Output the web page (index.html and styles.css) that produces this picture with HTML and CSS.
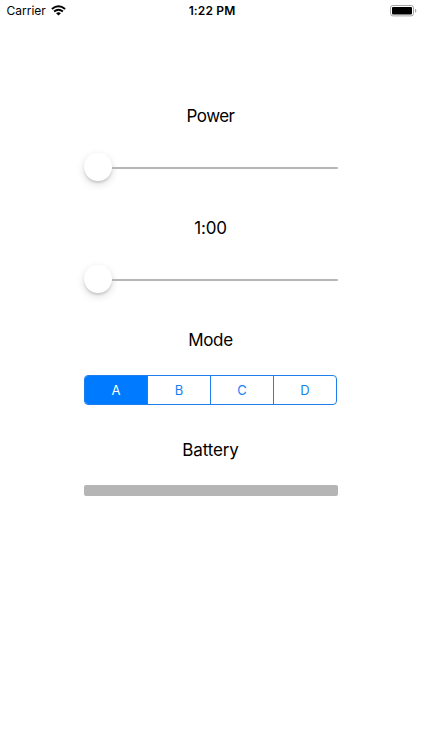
FILE: index.html
```html
<!DOCTYPE html>
<html lang="en">
<head>
<meta charset="utf-8">
<title>Controls</title>
<link rel="stylesheet" href="styles.css">
</head>
<body>
<header class="status">
  <div class="carrier"><span class="carrier-name">Carrier</span>
    <svg class="wifi" width="15" height="11" viewBox="0 0 15 11">
      <g fill="none" stroke="#000" stroke-width="1.9">
        <path d="M.9 3.9Q7.5-1.5 14.1 3.9"/>
        <path d="M3.1 6.4Q7.5 2.9 11.9 6.4"/>
      </g>
      <path d="M5.1 8.2Q7.5 6.4 9.9 8.2L7.5 10.5Z"/>
    </svg>
  </div>
  <div class="time">1:22 PM</div>
  <svg class="battery-icon" width="27" height="12" viewBox="0 0 27 12">
    <rect x=".5" y=".5" width="23" height="10.4" rx="2.4" fill="#fff" stroke="#a5a5a5"/>
    <rect x="2" y="2" width="20" height="7.5" rx="1"/>
    <path d="M25 3.8Q26.4 4.3 26.4 5.7T25 7.6Z" fill="#a5a5a5"/>
  </svg>
</header>
<main class="controls">
  <h2 class="label power">Power</h2>
  <div class="slider"><span class="thumb"></span><span class="track"></span></div>
  <h2 class="label duration">1:00</h2>
  <div class="slider"><span class="thumb"></span><span class="track"></span></div>
  <h2 class="label mode">Mode</h2>
  <div class="segments">
    <span class="segment selected">A</span><span class="segment">B</span><span class="segment">C</span><span class="segment">D</span>
  </div>
  <h2 class="label battery">Battery</h2>
  <div class="progress"></div>
</main>
</body>
</html>
```
FILE: styles.css
```css
* { box-sizing: border-box; }
body {
  margin: 0;
  height: 750px;
  overflow: hidden;
  background: #fff;
  color: #000;
  font-family: Inter, "Liberation Sans", sans-serif;
}
.status {
  display: grid;
  grid-template-columns: 1fr auto 1fr;
  align-items: center;
  height: 21px;
  padding: 0 5px 0 6.5px;
  font-size: 12px;
}
.carrier { display: flex; align-items: center; gap: 5px; }
.carrier-name { letter-spacing: 0; }
.time { font-weight: 600; letter-spacing: 0.15px; margin-left: 0.5px; }
.battery-icon { justify-self: end; }
.controls { width: 253px; margin: 84px 0 0 84px; }
.label {
  height: 22px;
  margin: 0;
  font-size: 17px;
  font-weight: 400;
  line-height: 23px;
  letter-spacing: -0.3px;
  text-align: center;
}
.power { letter-spacing: -0.55px; }
.duration { letter-spacing: -0.15px; }
.battery { letter-spacing: -0.15px; }
.slider {
  display: flex;
  align-items: center;
  height: 30px;
  margin: 25px 0 35px;
}
.thumb {
  width: 28px;
  height: 28px;
  margin-bottom: 1px;
  border-radius: 50%;
  background: #fff;
  box-shadow: 0 3px 8px rgba(0,0,0,.14), 0 2px 2px rgba(0,0,0,.12);
}
.track { flex: 1; height: 2px; margin-top: 1px; margin-right: -0.5px; background: #b5b5b5; border-radius: 0 1px 1px 0; }
.segments {
  display: grid;
  grid-template-columns: 62px repeat(3, 1fr);
  height: 30px;
  margin: 24px 0 34px;
  border: 1px solid #1f80ed;
  border-radius: 4px;
  overflow: hidden;
}
.segment {
  color: #1680f5;
  font-size: 13px;
  line-height: 29px;
  text-align: center;
}
.segment + .segment { border-left: 1px solid #1f80ed; }
.selected { background: #007aff; color: #fff; }
.progress { height: 10.5px; margin: 24px -0.5px 0 0; background: #b5b5b5; border-radius: 2px; }
```
